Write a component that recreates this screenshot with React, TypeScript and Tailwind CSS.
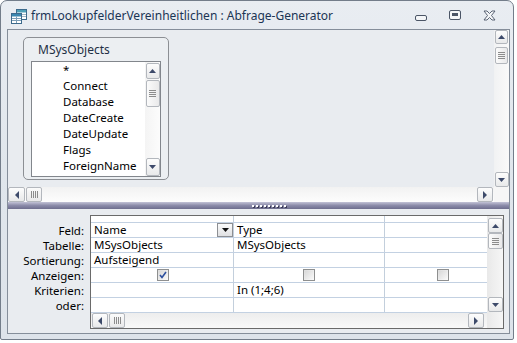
import React from "react";

type Dir = "up" | "down" | "left" | "right";

function Tri({ dir, color = "#3d4a6a" }: { dir: Dir; color?: string }) {
  const vertical = dir === "up" || dir === "down";
  const pts =
    dir === "up"
      ? "0,4 3.5,0 7,4"
      : dir === "down"
      ? "0,0 7,0 3.5,4"
      : dir === "left"
      ? "4,0 4,8 0,4"
      : "0,0 0,8 4,4";
  return (
    <svg width={vertical ? 7 : 4} height={vertical ? 4 : 8} viewBox={vertical ? "0 0 7 4" : "0 0 4 8"}>
      <polygon points={pts} fill={color} />
    </svg>
  );
}

function SBtn({ dir, className }: { dir: Dir; className: string }) {
  return (
    <div
      className={
        "flex items-center justify-center rounded-[2px] border border-[#b3b7bd] bg-gradient-to-b from-[#fdfdfd] to-[#e8e9ea] shrink-0 " +
        className
      }
    >
      <Tri dir={dir} />
    </div>
  );
}

function VThumb({ className }: { className: string }) {
  return (
    <div
      className={
        "flex flex-col items-center justify-center gap-[1px] rounded-[2px] border border-[#b3b7bd] bg-gradient-to-r from-[#fbfbfb] to-[#e9e9ea] shrink-0 " +
        className
      }
    >
      <div className="w-[7px] h-[1px] bg-[#8c8c8c]" />
      <div className="w-[7px] h-[1px] bg-[#8c8c8c]" />
      <div className="w-[7px] h-[1px] bg-[#8c8c8c]" />
      <div className="w-[7px] h-[1px] bg-[#8c8c8c]" />
    </div>
  );
}

function HThumb({ className }: { className: string }) {
  return (
    <div
      className={
        "flex flex-row items-center justify-center gap-[1px] rounded-[2px] border border-[#b3b7bd] bg-gradient-to-b from-[#fbfbfb] to-[#e9e9ea] shrink-0 " +
        className
      }
    >
      <div className="h-[7px] w-[1px] bg-[#8c8c8c]" />
      <div className="h-[7px] w-[1px] bg-[#8c8c8c]" />
      <div className="h-[7px] w-[1px] bg-[#8c8c8c]" />
      <div className="h-[7px] w-[1px] bg-[#8c8c8c]" />
    </div>
  );
}

function Check({ checked }: { checked?: boolean }) {
  return (
    <div className="w-[12px] h-[12px] border border-[#8e8f8f] bg-gradient-to-br from-[#dcdcdc] to-[#fbfbfb] p-[1px]">
      <div className="w-full h-full bg-gradient-to-br from-[#d9d9d9] to-[#f7f7f7] flex items-center justify-center">
        {checked && (
          <svg width="8" height="8" viewBox="0 0 8 8">
            <path d="M1 4 L3 6.5 L7 1" stroke="#2c4f9e" strokeWidth="1.6" fill="none" />
          </svg>
        )}
      </div>
    </div>
  );
}

function TitleIcon() {
  return (
    <svg width="16" height="15" viewBox="0 0 16 15">
      <rect x="5.5" y="0.5" width="10" height="10" fill="#ffffff" stroke="#3c6a8c" />
      <rect x="6" y="1" width="9" height="2.5" fill="#4fa0b8" />
      <line x1="6" y1="5.5" x2="15" y2="5.5" stroke="#9fb6c6" />
      <line x1="6" y1="7.5" x2="15" y2="7.5" stroke="#9fb6c6" />
      <line x1="10.5" y1="3.5" x2="10.5" y2="10" stroke="#9fb6c6" />
      <rect x="0.5" y="4.5" width="10" height="10" fill="#ffffff" stroke="#3c6a8c" />
      <rect x="1" y="5" width="9" height="2.5" fill="#3a87b0" />
      <line x1="1" y1="9.5" x2="10" y2="9.5" stroke="#7c9fb8" />
      <line x1="1" y1="11.5" x2="10" y2="11.5" stroke="#7c9fb8" />
      <line x1="5.5" y1="7.5" x2="5.5" y2="14" stroke="#7c9fb8" />
    </svg>
  );
}

const labels = ["Feld:", "Tabelle:", "Sortierung:", "Anzeigen:", "Kriterien:", "oder:"];
const fields = ["*", "Connect", "Database", "DateCreate", "DateUpdate", "Flags", "ForeignName"];

export default function App() {
  return (
    <div className="w-[517px] h-[343px] bg-white overflow-hidden font-['Noto_Sans',sans-serif] text-[11.5px] text-black">
      <div className="w-[514px] h-[340px] flex flex-col rounded-t-[7px] rounded-b-[2px] border border-[#737d8a] bg-gradient-to-b from-[#e9edf2] via-[#e0e6ec] to-[#dde3ea]">
        {/* Title bar */}
        <div className="h-[28px] shrink-0 flex items-center">
          <div className="ml-[10px] mt-[2px]">
            <TitleIcon />
          </div>
          <span className="ml-[4px] mt-[1px] text-[12px] text-[#1b3555] leading-none">
            frmLookupfelderVereinheitlichen : Abfrage-Generator
          </span>
          <div className="ml-auto flex items-center mr-[17px]">
            <svg width="12" height="6" viewBox="0 0 12 6" className="mt-[6px]">
              <rect x="0.5" y="0.5" width="11" height="5" rx="1.5" fill="#f4f6f8" stroke="#4b5566" />
            </svg>
            <svg width="12" height="10" viewBox="0 0 12 10" className="ml-[22px]">
              <rect x="0.5" y="0.5" width="11" height="9" rx="1.5" fill="#f4f6f8" stroke="#4b5566" />
              <rect x="3" y="3" width="6" height="3" fill="#4b5566" />
            </svg>
            <svg width="13" height="11" viewBox="0 0 13 11" className="ml-[22px]">
              <path
                d="M1 1 L4 1 L6.5 3.5 L9 1 L12 1 L8.5 5.5 L12 10 L9 10 L6.5 7.5 L4 10 L1 10 L4.5 5.5 Z"
                fill="#f4f6f8"
                stroke="#4b5566"
                strokeWidth="0.9"
                strokeLinejoin="round"
              />
            </svg>
          </div>
        </div>

        {/* Client area */}
        <div className="ml-[6px] mr-[3px] h-[305px] border border-[#858e9a] flex flex-col bg-[#e9ecf0]">
          {/* Upper pane */}
          <div className="h-[157px] flex shrink-0">
            <div className="flex-1 pl-[15px] pt-[7px]">
              <div className="w-[146px] h-[143px] rounded-[5px] border border-[#8c8f94] bg-[#eceff2] flex flex-col px-[7px] pb-[2px]">
                <div className="h-[23px] flex items-center pl-[7px] text-[12px] text-[#1e2f45]">MSysObjects</div>
                <div className="flex-1 border border-[#82868c] bg-white flex">
                  <div className="flex-1 flex flex-col">
                    {fields.map((f) => (
                      <div key={f} className="h-[16px] pl-[31px] flex items-center leading-none">
                        {f}
                      </div>
                    ))}
                  </div>
                  <div className="w-[15px] flex flex-col items-center bg-gradient-to-r from-[#f4f4f4] to-[#fcfcfc]">
                    <SBtn dir="up" className="w-[14px] h-[16px] mt-[1px]" />
                    <VThumb className="w-[14px] h-[27px] mt-[1px]" />
                    <div className="flex-1" />
                    <SBtn dir="down" className="w-[14px] h-[18px]" />
                  </div>
                </div>
              </div>
            </div>
            <div className="w-[15px] shrink-0 flex flex-col items-center bg-gradient-to-r from-[#f1f2f3] to-[#fafafa]">
              <SBtn dir="up" className="w-[13px] h-[14px]" />
              <VThumb className="w-[13px] h-[17px] mt-[3px]" />
              <div className="flex-1" />
              <SBtn dir="down" className="w-[14px] h-[15px]" />
            </div>
          </div>
          {/* Upper horizontal scrollbar */}
          <div className="h-[15px] shrink-0 flex">
            <div className="flex-1 flex items-center bg-gradient-to-b from-[#f2f2f2] to-[#fdfdfd]">
              <SBtn dir="left" className="w-[17px] h-[15px]" />
              <HThumb className="w-[16px] h-[15px] ml-[1px]" />
              <div className="flex-1" />
              <SBtn dir="right" className="w-[16px] h-[15px] mr-[1px]" />
            </div>
            <div className="w-[15px] bg-[#f6f6f6]" />
          </div>
          {/* Splitter */}
          <div className="h-[7px] shrink-0 bg-gradient-to-b from-[#c3c3d6] via-[#8b8ba9] to-[#6e6e8e] flex items-start justify-center pl-[20px]">
            <div className="flex gap-[2px] mt-[3px]">
              {Array.from({ length: 9 }).map((_, i) => (
                <div key={i} className="w-[2px] h-[2px] bg-white shadow-[1px_1px_0_#3c3c58]" />
              ))}
            </div>
          </div>
          {/* Lower pane */}
          <div className="flex-1 flex pt-[6px]">
            <div className="w-[76px] pt-[8px] flex flex-col items-end">
              {labels.map((l) => (
                <div key={l} className="h-[15px] flex items-center leading-none">
                  {l}
                </div>
              ))}
            </div>
            <div className="ml-[6px] w-[414px] h-[114px] border border-[#6a6a6a] bg-white flex">
              <div className="w-[396px] flex flex-col">
                <div className="h-[7px] border-b border-[#c3d1e2] flex">
                  <div className="w-[143px] border-r border-[#c3cfdc]" />
                  <div className="w-[151px] border-r border-[#c3cfdc]" />
                  <div className="flex-1" />
                </div>
                {/* Feld */}
                <div className="h-[15px] border-b border-[#c3d1e2] flex">
                  <div className="w-[143px] border-r border-[#c3cfdc] flex items-center">
                    <span className="pl-[3px] flex-1 leading-none">Name</span>
                    <div className="w-[16px] h-[14px] border border-[#8d8f93] bg-gradient-to-b from-[#fbfbfb] to-[#dfe0e2] flex items-center justify-center">
                      <Tri dir="down" color="#111111" />
                    </div>
                  </div>
                  <div className="w-[151px] border-r border-[#c3cfdc] flex items-center pl-[3px] leading-none">Type</div>
                  <div className="flex-1" />
                </div>
                {/* Tabelle */}
                <div className="h-[15px] border-b border-[#c3d1e2] flex">
                  <div className="w-[143px] border-r border-[#c3cfdc] flex items-center pl-[3px] leading-none">MSysObjects</div>
                  <div className="w-[151px] border-r border-[#c3cfdc] flex items-center pl-[3px] leading-none">MSysObjects</div>
                  <div className="flex-1" />
                </div>
                {/* Sortierung */}
                <div className="h-[15px] border-b border-[#c3d1e2] flex">
                  <div className="w-[143px] border-r border-[#c3cfdc] flex items-center pl-[3px] leading-none">Aufsteigend</div>
                  <div className="w-[151px] border-r border-[#c3cfdc]" />
                  <div className="flex-1" />
                </div>
                {/* Anzeigen */}
                <div className="h-[15px] border-b border-[#c3d1e2] flex">
                  <div className="w-[143px] border-r border-[#c3cfdc] flex items-center pl-[66px]">
                    <Check checked />
                  </div>
                  <div className="w-[151px] border-r border-[#c3cfdc] flex items-center pl-[69px]">
                    <Check />
                  </div>
                  <div className="flex-1 flex items-center pl-[52px]">
                    <Check />
                  </div>
                </div>
                {/* Kriterien */}
                <div className="h-[15px] border-b border-[#c3d1e2] flex">
                  <div className="w-[143px] border-r border-[#c3cfdc]" />
                  <div className="w-[151px] border-r border-[#c3cfdc] flex items-center pl-[3px] leading-none">In (1;4;6)</div>
                  <div className="flex-1" />
                </div>
                {/* oder */}
                <div className="h-[15px] border-b border-[#c3d1e2] flex">
                  <div className="w-[143px] border-r border-[#c3cfdc]" />
                  <div className="w-[151px] border-r border-[#c3cfdc]" />
                  <div className="flex-1" />
                </div>
                {/* horizontal scrollbar */}
                <div className="h-[15px] flex items-center bg-gradient-to-b from-[#ededed] to-[#f9f9f9]">
                  <SBtn dir="left" className="w-[16px] h-[15px] ml-[1px]" />
                  <HThumb className="w-[16px] h-[15px] ml-[1px]" />
                  <div className="flex-1" />
                  <SBtn dir="right" className="w-[16px] h-[15px] mr-[3px]" />
                </div>
              </div>
              <div className="w-[16px] flex flex-col items-center bg-gradient-to-r from-[#e9e9e9] to-[#f6f6f6]">
                <SBtn dir="up" className="w-[15px] h-[15px] mt-[2px]" />
                <VThumb className="w-[15px] h-[16px]" />
                <div className="flex-1" />
                <SBtn dir="down" className="w-[15px] h-[15px] mb-[16px]" />
              </div>
            </div>
          </div>
        </div>
      </div>
    </div>
  );
}
